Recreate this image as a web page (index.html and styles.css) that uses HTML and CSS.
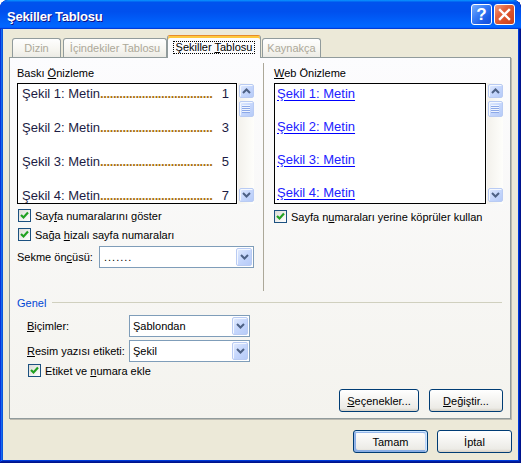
FILE: index.html
```html
<!DOCTYPE html>
<html lang="tr">
<head>
<meta charset="utf-8">
<title>Şekiller Tablosu</title>
<link rel="stylesheet" href="styles.css">
</head>
<body>
<div class="window">
  <div class="titlebar">
    <span class="title">Şekiller Tablosu</span>
    <div class="tb-btn help"><span>?</span></div>
    <div class="tb-btn close">
      <svg width="19" height="19" viewBox="0 0 19 19"><path d="M5 5 L14 14 M14 5 L5 14" stroke="#fff" stroke-width="2.4" stroke-linecap="square" fill="none"/></svg>
    </div>
  </div>
  <div class="client">
    <div class="tabs">
      <div class="tab t1">Dizin</div>
      <div class="tab t2">İçindekiler Tablosu</div>
      <div class="tab sel"><span class="focus">Şekiller <u>T</u>ablosu</span></div>
      <div class="tab t4">Kaynakça</div>
    </div>
    <div class="panel">
      <div class="top">
        <div class="col left">
          <div class="lbl">Baskı <u>Ö</u>nizleme</div>
          <div class="preview-row">
            <div class="preview print">
              <div class="entry"><span>Şekil 1: Metin</span><span class="lead">...................................</span><span class="num">1</span></div>
              <div class="entry"><span>Şekil 2: Metin</span><span class="lead">...................................</span><span class="num">3</span></div>
              <div class="entry"><span>Şekil 3: Metin</span><span class="lead">...................................</span><span class="num">5</span></div>
              <div class="entry"><span>Şekil 4: Metin</span><span class="lead">...................................</span><span class="num">7</span></div>
            </div>
            <div class="scrollbar">
              <div class="sb-btn"><svg width="9" height="6" viewBox="0 0 9 6"><path d="M1 5 L4.5 1.5 L8 5" stroke="#4D6185" stroke-width="2" fill="none"/></svg></div>
              <div class="sb-thumb"><svg width="8" height="8" viewBox="0 0 8 8"><path d="M0 1.5H8M0 3.5H8M0 5.5H8M0 7.5H8" stroke="#8CA8E8" stroke-width="1"/><path d="M0 0.5H8M0 2.5H8M0 4.5H8M0 6.5H8" stroke="#F0F5FE" stroke-width="1"/></svg></div>
              <div class="sb-btn down"><svg width="9" height="6" viewBox="0 0 9 6"><path d="M1 1 L4.5 4.5 L8 1" stroke="#4D6185" stroke-width="2" fill="none"/></svg></div>
            </div>
          </div>
          <div class="check c1"><span class="cb"><svg width="11" height="11" viewBox="0 0 11 11"><path d="M2 5 L4.5 7.5 L9 2.5" stroke="#21A121" stroke-width="2.2" fill="none"/></svg></span><span>Say<u>f</u>a numaralarını göster</span></div>
          <div class="check c2"><span class="cb"><svg width="11" height="11" viewBox="0 0 11 11"><path d="M2 5 L4.5 7.5 L9 2.5" stroke="#21A121" stroke-width="2.2" fill="none"/></svg></span><span>Sağa <u>h</u>izalı sayfa numaraları</span></div>
          <div class="field-row">
            <span class="flabel">Sekme ön<u>c</u>üsü:</span>
            <div class="combo tab-combo"><span class="val">.......</span><span class="cbtn"><svg width="9" height="6" viewBox="0 0 9 6"><path d="M1 1 L4.5 4.5 L8 1" stroke="#4D6185" stroke-width="2" fill="none"/></svg></span></div>
          </div>
        </div>
        <div class="vsep"></div>
        <div class="col right">
          <div class="lbl"><u>W</u>eb Önizleme</div>
          <div class="preview-row">
            <div class="preview web">
              <div class="entry"><span class="link">Şekil 1: Metin</span></div>
              <div class="entry"><span class="link">Şekil 2: Metin</span></div>
              <div class="entry"><span class="link">Şekil 3: Metin</span></div>
              <div class="entry"><span class="link">Şekil 4: Metin</span></div>
            </div>
            <div class="scrollbar">
              <div class="sb-btn"><svg width="9" height="6" viewBox="0 0 9 6"><path d="M1 5 L4.5 1.5 L8 5" stroke="#4D6185" stroke-width="2" fill="none"/></svg></div>
              <div class="sb-thumb"><svg width="8" height="8" viewBox="0 0 8 8"><path d="M0 1.5H8M0 3.5H8M0 5.5H8M0 7.5H8" stroke="#8CA8E8" stroke-width="1"/><path d="M0 0.5H8M0 2.5H8M0 4.5H8M0 6.5H8" stroke="#F0F5FE" stroke-width="1"/></svg></div>
              <div class="sb-btn down"><svg width="9" height="6" viewBox="0 0 9 6"><path d="M1 1 L4.5 4.5 L8 1" stroke="#4D6185" stroke-width="2" fill="none"/></svg></div>
            </div>
          </div>
          <div class="check c1 r"><span class="cb"><svg width="11" height="11" viewBox="0 0 11 11"><path d="M2 5 L4.5 7.5 L9 2.5" stroke="#21A121" stroke-width="2.2" fill="none"/></svg></span><span>Sayfa n<u>u</u>maraları yerine köprüler kullan</span></div>
        </div>
      </div>
      <div class="group">
        <span class="gtitle">Genel</span><span class="gline"></span>
      </div>
      <div class="grow g1">
        <span class="glabel"><u>B</u>içimler:</span>
        <div class="combo gen-combo"><span class="val">Şablondan</span><span class="cbtn"><svg width="9" height="6" viewBox="0 0 9 6"><path d="M1 1 L4.5 4.5 L8 1" stroke="#4D6185" stroke-width="2" fill="none"/></svg></span></div>
      </div>
      <div class="grow g2">
        <span class="glabel"><u>R</u>esim yazısı etiketi:</span>
        <div class="combo gen-combo"><span class="val">Şekil</span><span class="cbtn"><svg width="9" height="6" viewBox="0 0 9 6"><path d="M1 1 L4.5 4.5 L8 1" stroke="#4D6185" stroke-width="2" fill="none"/></svg></span></div>
      </div>
      <div class="check g3"><span class="cb"><svg width="11" height="11" viewBox="0 0 11 11"><path d="M2 5 L4.5 7.5 L9 2.5" stroke="#21A121" stroke-width="2.2" fill="none"/></svg></span><span>Etiket ve <u>n</u>umara ekle</span></div>
      <div class="panel-buttons">
        <div class="btn b-sec"><span><u>S</u>eçenekler...</span></div>
        <div class="btn b-deg"><span><u>D</u>eğiştir...</span></div>
      </div>
    </div>
    <div class="dlg-buttons">
      <div class="btn b-ok default">Tamam</div>
      <div class="btn b-cancel">İptal</div>
    </div>
  </div>
</div>
</body>
</html>
```
FILE: styles.css
```css
* { box-sizing: border-box; }
html, body { margin: 0; padding: 0; }
body {
  width: 521px;
  height: 463px;
  overflow: hidden;
  background: #ffffff;
  font-family: Tahoma, "Liberation Sans", Arial, sans-serif;
  font-size: 11px;
  color: #000;
}
u { text-decoration: underline; text-underline-offset: 1px; }

.window {
  width: 521px;
  height: 463px;
  display: flex;
  flex-direction: column;
  background: #ECE9D8;
  border-radius: 8px 8px 0 0;
  overflow: hidden;
  box-shadow: inset -1px -1px #00138c, inset 1px 1px #0831d9, inset -2px -2px #001ea0, inset 2px 2px #166aee, inset -3px -3px #003bda, inset 3px 3px #0855dd;
}

.titlebar {
  height: 29px;
  flex: none;
  display: flex;
  align-items: flex-start;
  padding: 0 6px 0 7px;
  border-radius: 8px 8px 0 0;
  background: linear-gradient(180deg, #0997ff, #0053ee 8%, #0050ee 40%, #0066ff 88%, #0066ff 93%, #005bff 95%, #003dd7 96%, #003dd7);
}
.title {
  flex: 1;
  margin-top: 9px;
  line-height: 15px;
  color: #fff;
  font-family: "Liberation Sans", Arial, sans-serif;
  font-weight: bold;
  font-size: 13px;
  letter-spacing: -0.2px;
  text-shadow: 1px 1px #0f1089;
}
.tb-btn {
  width: 21px;
  height: 21px;
  margin-top: 4px;
  border: 1px solid #fff;
  border-radius: 3px;
  display: flex;
  align-items: center;
  justify-content: center;
}
.help {
  margin-right: 2px;
  background: linear-gradient(135deg, #79aefc 0%, #3a7ef6 40%, #1b5ae6 75%, #1450dc 100%);
}
.help span {
  color: #fff;
  font-family: "Liberation Sans", Arial, sans-serif;
  font-weight: bold;
  font-size: 17px;
  line-height: 17px;
}
.close {
  background: linear-gradient(135deg, #f3a082 0%, #e4643f 35%, #d94f27 65%, #c8401b 100%);
}
.close svg { display: block; }

.client {
  flex: 1;
  margin: 0 3px 3px 3px;
  display: flex;
  flex-direction: column;
}

/* tabs */
.tabs {
  flex: none;
  height: 28px;
  display: flex;
  align-items: flex-end;
  padding-left: 9px;
  position: relative;
  z-index: 1;
}
.tab {
  height: 19px;
  border: 1px solid #919b9c;
  border-bottom: none;
  border-radius: 3px 3px 0 0;
  background: linear-gradient(180deg, #fefefe 0%, #f6f5f0 60%, #ecebe5 100%);
  color: #aca899;
  text-align: center;
  line-height: 13px;
  padding-top: 3px;
  white-space: nowrap;
}
.t1 { width: 49px; }
.t2 { width: 104px; margin-left: 2px; }
.t4 { width: 59px; margin-left: 1px; }
.sel {
  width: 94px;
  height: 23px;
  margin-bottom: -1px;
  color: #000;
  background: #fcfcfe;
  border-top: 1px solid #e68b2c;
  box-shadow: inset 0 2px #ffc83c;
  padding-top: 5px;
}
.focus {
  display: inline-block;
  border: 1px dotted #000;
  padding: 0 2px;
  line-height: 11px;
}

/* panel */
.panel {
  flex: none;
  margin-left: 6px;
  width: 502px;
  height: 362px;
  border: 1px solid #919b9c;
  box-shadow: 1px 1px 0 #bcbab0;
  background: linear-gradient(180deg, #fcfcfe 0%, #f4f3ee 100%);
  padding: 9px 7px 0 7px;
  display: flex;
  flex-direction: column;
}
.top {
  height: 224px;
  display: flex;
  flex: none;
}
.col { display: flex; flex-direction: column; }
.left { width: 237px; }
.right { width: 229px; }
.vsep {
  width: 1px;
  margin: -4px 10px 0 9px;
  background: #aca899;
}
.lbl {
  height: 13px;
  line-height: 13px;
  margin-bottom: 3px;
}
.preview-row {
  display: flex;
  height: 121px;
  gap: 1px;
}
.preview {
  border: 1px solid #000;
  background: #fff;
  overflow: hidden;
  padding: 2px 7px 0 4px;
}
.print { width: 221px; }
.web { width: 212px; padding-left: 2px; }
.entry {
  display: flex;
  height: 16px;
  line-height: 16px;
  font-family: "Liberation Sans", Arial, sans-serif;
  font-size: 13px;
  white-space: nowrap;
  margin-bottom: 18px;
  color: #1c1c44;
}
.web .entry { margin-bottom: 17px; }
.lead {
  color: #a8700f;
  font-weight: bold;
  letter-spacing: -0.4px;
}
.num { color: #1c1c44; margin-left: auto; }
.link {
  color: #2222ff;
  text-decoration: underline;
  text-decoration-color: #0000ff;
  text-underline-offset: 2px;
}

.scrollbar {
  width: 16px;
  display: flex;
  flex-direction: column;
  align-items: center;
  padding: 1px 0 2px;
  background: linear-gradient(90deg, #f3f1ec, #fefefb);
}
.sb-btn, .sb-thumb, .cbtn {
  border: 1px solid #b9cbf3;
  border-radius: 2px;
  background: linear-gradient(135deg, #e2ebfe 0%, #c6d7fc 50%, #b6cbf8 100%);
  box-shadow: inset 1px 1px #f4f8ff;
  display: flex;
  align-items: center;
  justify-content: center;
}
.sb-btn { width: 15px; height: 14px; }
.sb-btn.down { margin-top: auto; }
.sb-thumb { width: 15px; height: 16px; margin-top: 3px; }
.sb-btn svg, .sb-thumb svg, .cbtn svg { display: block; }

/* checkboxes */
.check {
  display: flex;
  align-items: center;
  height: 13px;
  white-space: nowrap;
}
.c1 { margin-top: 5px; }
.c2 { margin-top: 6px; }
.left .check { margin-left: 1px; }
.r { margin-top: 6px; }
.cb {
  width: 13px;
  height: 13px;
  flex: none;
  border: 1px solid #1c5180;
  background: linear-gradient(135deg, #dcdcd7, #ffffff);
  margin-right: 4px;
  display: flex;
}
.cb svg { display: block; }

.field-row {
  display: flex;
  align-items: center;
  height: 22px;
  margin-top: 5px;
}
.flabel { width: 82px; }
.combo {
  display: flex;
  height: 22px;
  border: 1px solid #7f9db9;
  background: #fff;
}
.combo .val {
  flex: 1;
  padding-left: 3px;
  line-height: 20px;
  white-space: nowrap;
}
.tab-combo .val { letter-spacing: 1px; padding-left: 4px; }
.cbtn {
  width: 16px;
  margin: 1px;
}
.tab-combo { width: 155px; }
.gen-combo { width: 121px; }

/* group */
.group {
  display: flex;
  align-items: center;
  height: 13px;
  margin-top: 5px;
}
.gtitle { color: #0046d5; margin-right: 6px; }
.gline { flex: 1; height: 1px; background: #d0d0bf; margin-right: 1px; }
.grow {
  display: flex;
  align-items: center;
  height: 22px;
  padding-left: 10px;
}
.g1 { margin-top: 6px; }
.g2 { margin-top: 3px; }
.glabel { width: 102px; }
.g3 { margin-top: 2px; padding-left: 11px; }

/* buttons */
.btn {
  height: 23px;
  border: 1px solid #003c74;
  border-radius: 3px;
  background: linear-gradient(180deg, #ffffff 0%, #ecebe6 86%, #d6d0c5 100%);
  display: flex;
  align-items: center;
  justify-content: center;
  white-space: nowrap;
}
.panel-buttons {
  display: flex;
  justify-content: flex-end;
  gap: 10px;
  margin-top: 12px;
  margin-right: 0;
}
.b-sec { width: 80px; }
.b-deg { width: 74px; }
.dlg-buttons {
  display: flex;
  justify-content: flex-end;
  gap: 9px;
  margin-top: 11px;
  padding-right: 6px;
}
.b-ok, .b-cancel { width: 75px; }
.default {
  box-shadow: inset -1px 1px #cee7ff, inset 1px 2px #98b8ea, inset -2px 2px #bcd4f6, inset 1px -1px #89ade4, inset 2px -2px #89ade4;
}
```
